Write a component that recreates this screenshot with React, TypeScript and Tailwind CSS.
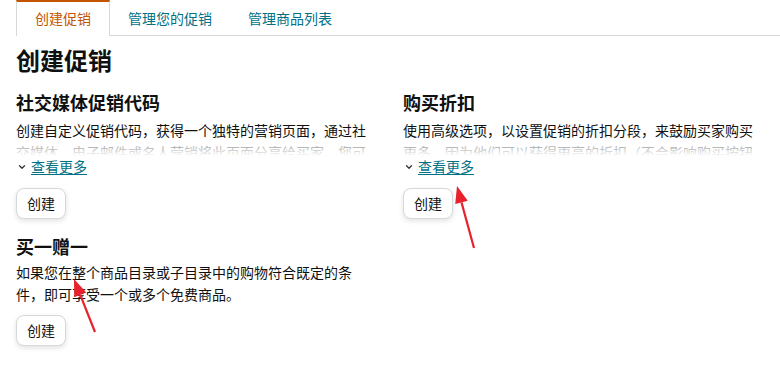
import { ChevronDown } from "lucide-react";

const tabs = ["创建促销", "管理您的促销", "管理商品列表"];

function Promo({
  title,
  text,
  collapsed,
}: {
  title: string;
  text: string;
  collapsed?: boolean;
}) {
  return (
    <div className="w-[350px]">
      <h2 className="text-[18px] leading-6 font-bold">{title}</h2>
      {collapsed ? (
        <>
          <div className="relative mt-1 h-[36px] overflow-hidden text-sm leading-[22px]">
            <p>{text}</p>
            <div className="absolute inset-x-0 top-[22px] h-[14px] bg-gradient-to-b from-white/50 to-white" />
          </div>
          <div className="mt-[1px] flex items-center gap-[4px] text-sm leading-5">
            <ChevronDown className="ml-[1px] size-[10px] text-[#333]" strokeWidth={3} />
            <a className="text-[#007185] underline underline-offset-2">查看更多</a>
          </div>
          <button className="mt-[11px] h-[31px] rounded-lg border border-[#d5d9d9] bg-white px-[10px] text-sm shadow-[0_2px_5px_rgba(15,17,17,0.12)]">
            创建
          </button>
        </>
      ) : (
        <>
          <p className="mt-[2px] text-sm leading-[22px]">{text}</p>
          <button className="mt-[9px] h-[31px] rounded-lg border border-[#d5d9d9] bg-white px-[10px] text-sm shadow-[0_2px_5px_rgba(15,17,17,0.12)]">
            创建
          </button>
        </>
      )}
    </div>
  );
}

function Arrow({ x1, y1, x2, y2 }: { x1: number; y1: number; x2: number; y2: number }) {
  const a = Math.atan2(y2 - y1, x2 - x1);
  const len = 17;
  const w = 6.5;
  const bx = x2 - len * Math.cos(a);
  const by = y2 - len * Math.sin(a);
  const px = -Math.sin(a) * w;
  const py = Math.cos(a) * w;
  return (
    <g>
      <line x1={x1} y1={y1} x2={bx} y2={by} stroke="#e8222c" strokeWidth={2.2} />
      <polygon
        points={`${x2},${y2} ${bx + px},${by + py} ${bx - px},${by - py}`}
        fill="#e8222c"
      />
    </g>
  );
}

export default function App() {
  return (
    <div className="relative h-[374px] w-[780px] overflow-hidden bg-white font-['Liberation_Sans','Noto_Sans_CJK_SC',sans-serif] text-[#0f1111]">
      <div className="flex h-9 pl-4">
        {tabs.map((tab, i) =>
          i === 0 ? (
            <div
              key={tab}
              className="flex items-center border-x border-t-2 border-x-[#d5d9d9] border-t-[#c45500] px-[18px] text-sm text-[#c45500]"
            >
              {tab}
            </div>
          ) : (
            <div
              key={tab}
              className="flex items-center border-b border-[#d5d9d9] px-[18px] pt-[2px] text-sm text-[#007185]"
            >
              {tab}
            </div>
          ),
        )}
        <div className="flex-1 border-b border-[#d5d9d9]" />
      </div>

      <div className="px-4">
        <h1 className="mt-[10px] text-2xl leading-8 font-bold">创建促销</h1>
        <div className="mt-[14px] grid grid-cols-[350px_350px] gap-x-[37px]">
          <Promo
            title="社交媒体促销代码"
            collapsed
            text="创建自定义促销代码，获得一个独特的营销页面，通过社交媒体、电子邮件或名人营销将此页面分享给买家。您可以跟踪促销代码的使用情况。"
          />
          <Promo
            title="购买折扣"
            collapsed
            text="使用高级选项，以设置促销的折扣分段，来鼓励买家购买更多，因为他们可以获得更高的折扣（不会影响购买按钮资格）。"
          />
          <div className="mt-[17px]">
            <Promo
              title="买一赠一"
              text="如果您在整个商品目录或子目录中的购物符合既定的条件，即可享受一个或多个免费商品。"
            />
          </div>
        </div>
      </div>

      <svg className="pointer-events-none absolute inset-0" width={780} height={374}>
        <Arrow x1={474} y1={248} x2={457} y2={186} />
        <Arrow x1={95} y1={332} x2={74} y2={279} />
      </svg>
    </div>
  );
}
